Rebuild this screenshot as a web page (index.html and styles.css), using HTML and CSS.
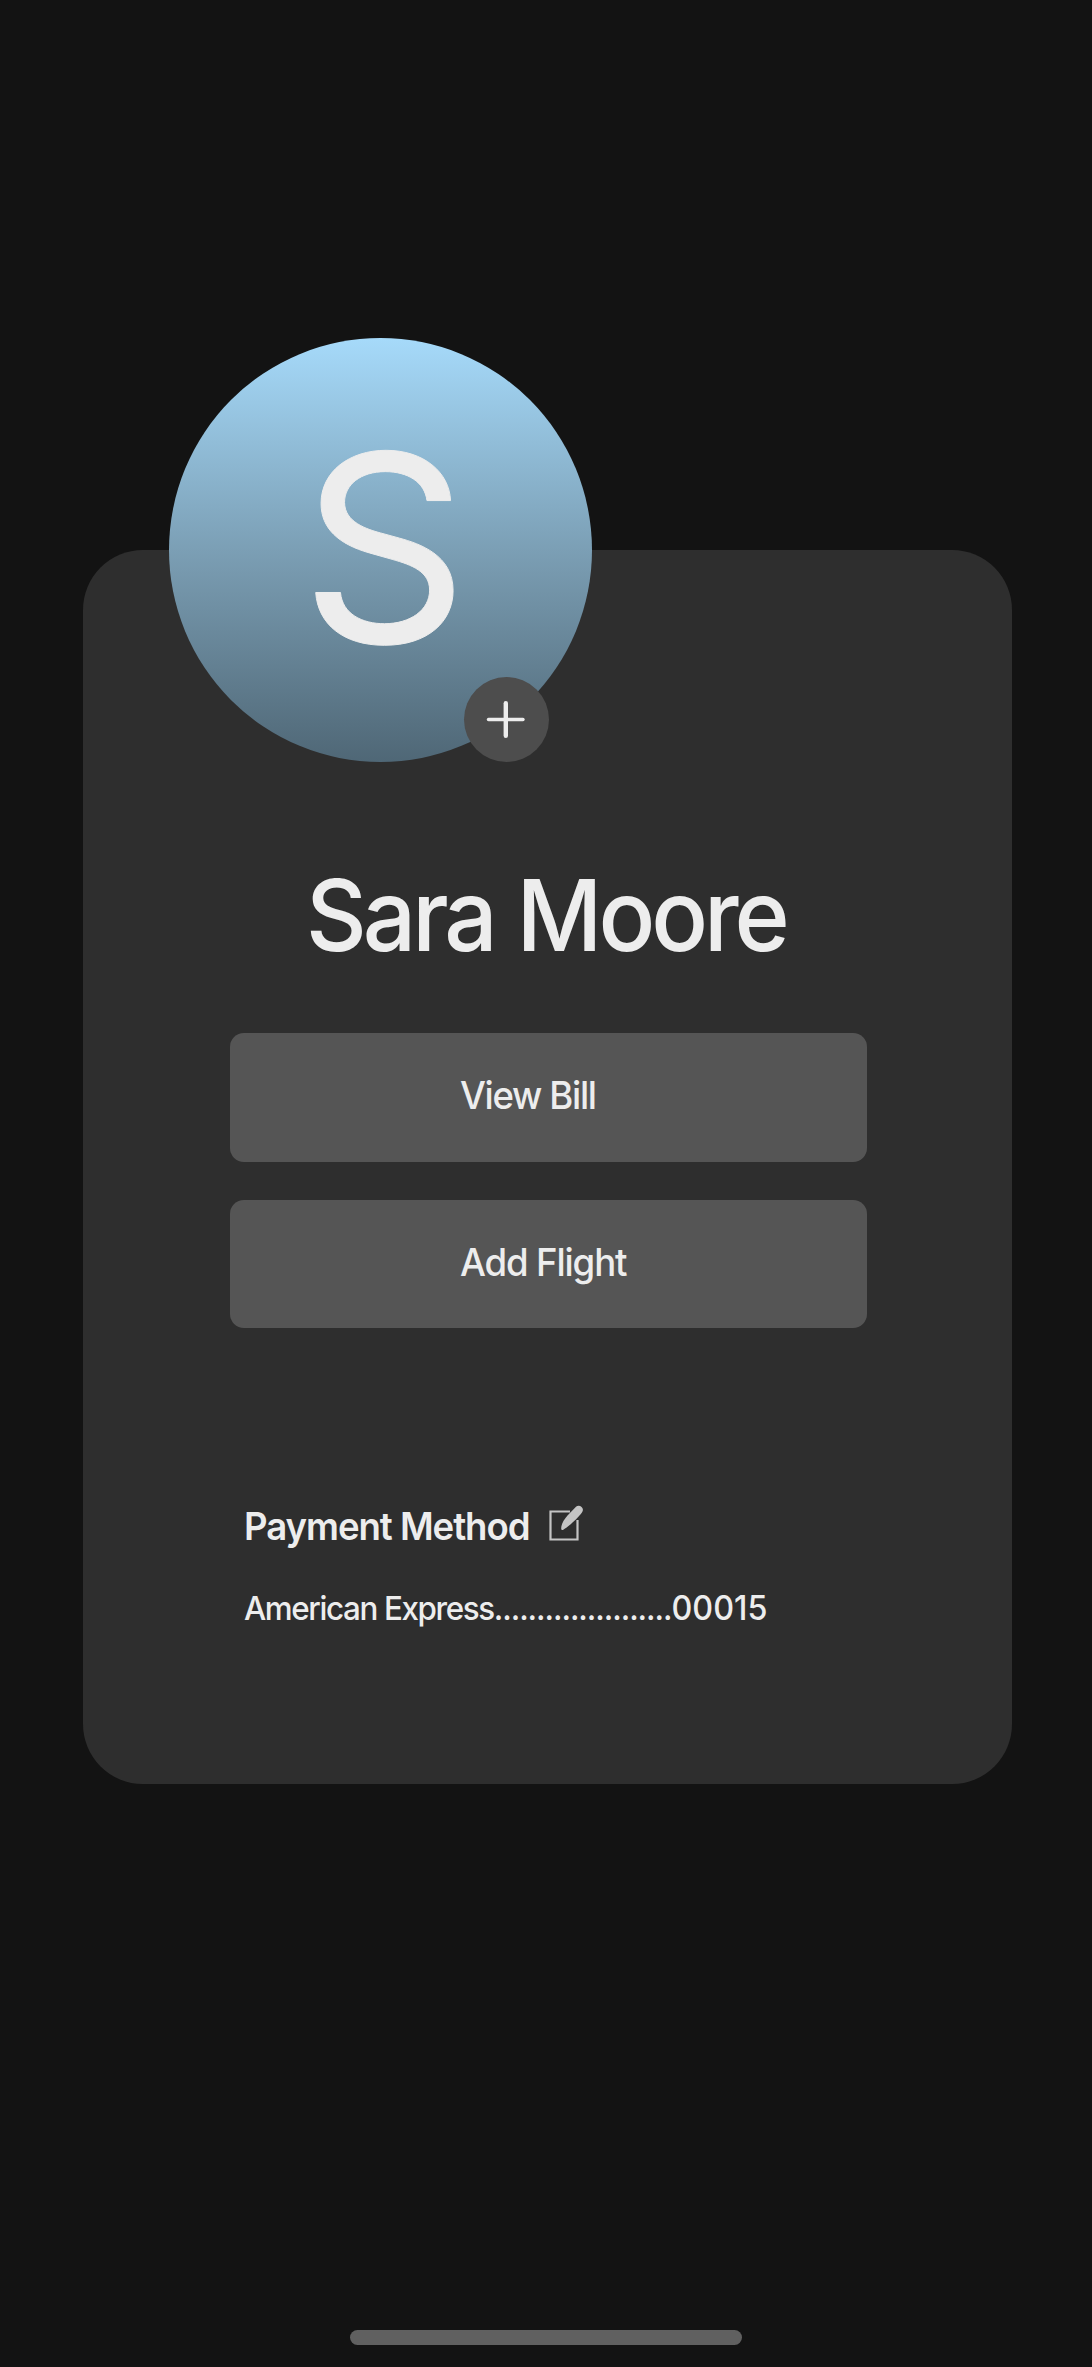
FILE: index.html
```html
<!DOCTYPE html>
<html lang="en">
<head>
<meta charset="utf-8">
<title>Profile</title>
<link rel="stylesheet" href="styles.css">
</head>
<body>
<main class="screen">
  <section class="card">
    <div class="avatar">
      <span class="initial">S</span>
      <button class="add-photo" aria-label="Add photo">
        <svg width="85" height="85" viewBox="0 0 85 85"><path d="M24.5 42.5H59" stroke-width="3.4"/><path d="M41.8 26.2V58.8" stroke-width="4.4"/></svg>
      </button>
    </div>
    <h1 class="name">Sara Moore</h1>
    <div class="actions">
      <button class="action bill"><span>View Bill</span></button>
      <button class="action flight"><span>Add Flight</span></button>
    </div>
    <div class="payment">
      <div class="payment-head">
        <h2 class="payment-title">Payment Method</h2>
        <svg class="edit" width="36" height="38" viewBox="0 0 36 38"><path class="box" d="M22 6.5H2.5V34.5H29.5V15"/><path class="pen" d="M13.2 23.6C13 20 15.5 15 19.5 10.5L28 1.8C31-1 36.5 2.5 34.5 6.5C32.5 10 27 15.5 23 19C20 21.5 17 23.7 15 25C13.8 25.4 13.2 24.8 13.2 23.6Z"/></svg>
      </div>
      <p class="account"><span class="brand">American Express</span><span class="dots">.....................</span><span class="digits">00015</span></p>
    </div>
  </section>
  <div class="home-bar"></div>
</main>
</body>
</html>
```

FILE: styles.css
```css
* { box-sizing: border-box; }

body {
  margin: 0;
  background: #131313;
  color: #ededed;
  font-family: Inter, "Liberation Sans", sans-serif;
}

h1, h2, p { margin: 0; font-weight: 400; }

button {
  border: 0;
  padding: 0;
  color: inherit;
  font: inherit;
}

.screen {
  display: flex;
  flex-direction: column;
  width: 1092px;
  height: 2367px;
  padding: 550px 80px 22px 83px;
}

.card {
  display: flex;
  flex-direction: column;
  height: 1234px;
  border-radius: 60px;
  background: #2e2e2e;
}

.avatar {
  position: relative;
  flex: none;
  width: 423px;
  height: 424px;
  margin: -212px 0 0 86px;
  border-radius: 50%;
  background: linear-gradient(#a6dafa, #7799ae 55%, #4f6776);
  padding: 80px 0 0 132px;
}

.initial {
  display: block;
  font-size: 260px;
  line-height: 260px;
  -webkit-text-stroke: 1px #ededed;
}

.add-photo {
  position: absolute;
  right: 43.5px;
  bottom: 0;
  width: 85px;
  height: 85px;
  border-radius: 50%;
  background: #4d4d4d;
}

.add-photo svg {
  display: block;
  fill: none;
  stroke: #ededed;
  stroke-linecap: round;
}

.name,
.action span,
.payment-title,
.account {
  transform: scaleX(0.95);
  transform-origin: left;
  white-space: nowrap;
}

.name {
  margin: 93px 0 0 223px;
  font-size: 99px;
  line-height: 120px;
  font-weight: 450;
  letter-spacing: -4.2px;
  word-spacing: 2px;
}

.actions {
  display: grid;
  grid-template-rows: 129px 128px;
  gap: 38px;
  width: 637px;
  margin: 58px 0 0 147px;
}

.action {
  padding: 0 0 6px 230px;
  border-radius: 14px;
  background: #555;
  font-size: 38.5px;
  font-weight: 500;
  text-align: left;
}

.action span { display: block; }
.bill { letter-spacing: -1.42px; }
.flight { padding-bottom: 4px; letter-spacing: -1.2px; }

.payment { margin: 172px 0 0 161px; }

.payment-head {
  display: flex;
  align-items: flex-start;
}

.payment-title {
  width: 304px;
  font-size: 38.5px;
  line-height: 52px;
  font-weight: 600;
  letter-spacing: -1.1px;
}

.edit { margin-top: 5px; }
.edit .box { fill: none; stroke: #c4c4c4; stroke-width: 2.2; }
.edit .pen { fill: #c4c4c4; }

.account {
  margin-top: 34px;
  font-size: 33px;
  line-height: 44px;
  font-weight: 500;
}

.brand { letter-spacing: -1.45px; }
.dots { letter-spacing: -1.1px; }
.digits { font-size: 34px; letter-spacing: 0; }

.home-bar {
  width: 392px;
  height: 15px;
  margin: auto 0 0 267px;
  border-radius: 8px;
  background: #606060;
}
```
